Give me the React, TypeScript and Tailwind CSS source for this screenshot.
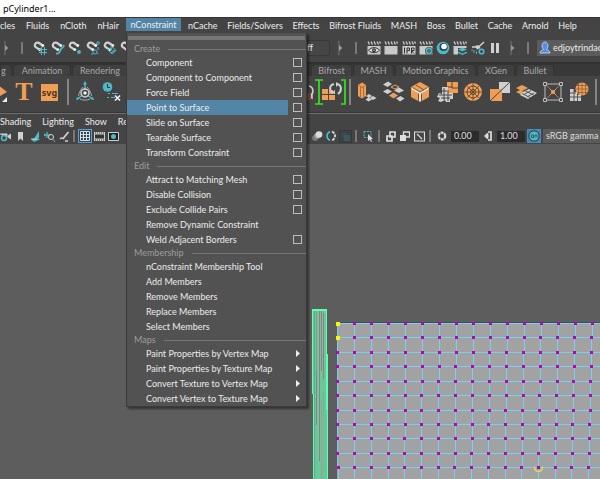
import type { ReactNode } from "react";

const TEAL = "#4db8c6";
const ORANGE = "#ee9f55";
const LIGHT = "#d0d0d0";

type IconProps = { w?: number; h?: number; children: ReactNode };

function Icon({ w = 14, h = 14, children }: IconProps) {
  return (
    <svg width={w} height={h} viewBox={`0 0 ${w} ${h}`} fill="none" className="block shrink-0" aria-hidden="true">
      {children}
    </svg>
  );
}

function Tool({ label, children, className = "" }: { label: string; children: ReactNode; className?: string }) {
  return (
    <button type="button" aria-label={label} className={`flex shrink-0 items-center justify-center ${className}`}>
      {children}
    </button>
  );
}

function Divider({ tall = false }: { tall?: boolean }) {
  return <span className={tall ? "h-[26px] w-[2px] shrink-0 bg-[#858585]" : "h-3 w-[2px] shrink-0 bg-[#787878]"} />;
}

function Collapser() {
  return (
    <Icon w={5} h={14}>
      <path d="M1 0v14" stroke="#777" />
      <path d="M1 4l3.500 3L1 10z" fill="#999" />
    </Icon>
  );
}

/* ---------- status line icons ---------- */

function Magnet({ children }: { children?: ReactNode }) {
  return (
    <Icon>
      <path d="M6.800 8.800 2.800 6.200C.8 4.600 2.200 1.200 5 1.700c1.200.2 1.800.8 5 3" stroke={LIGHT} strokeWidth="2.200" />
      <path d="m6 8 1.800 1.300M9 4l1.800 1.200" stroke="#fff" strokeWidth="2.600" />
      {children}
    </Icon>
  );
}

const magnets: { label: string; art: ReactNode }[] = [
  { label: "Snap to grids", art: <path d="M8.500 6v8M11.500 6v8M6 8.500h8M6 11.500h8" stroke={TEAL} /> },
  { label: "Snap to curves", art: <path d="M5 12.500c5 .5 3.500-3.500 5.500-5s2-1 2.500-3.500" stroke={TEAL} strokeWidth="1.800" /> },
  { label: "Snap to points", art: <circle cx="11" cy="11" r="1.900" fill={TEAL} /> },
  {
    label: "Snap to projected center",
    art: (
      <g stroke={TEAL}>
        <circle cx="9" cy="11" r="2" />
        <circle cx="12" cy="2" r="1.300" />
        <path d="M12 6v3M5 13h2M12 12v1" />
      </g>
    ),
  },
  {
    label: "Snap to view planes",
    art: <path d="m5 9 4-3.500 4 4L9 13zM7 7.500l4 4M9.500 6 7 10.500M12 9l-4 3" stroke={TEAL} />,
  },
];

function Clapper({ children }: { children?: ReactNode }) {
  return (
    <Icon>
      <path d="m1 .5 1.500 3M4 .5l1.500 3M7 .5l1.500 3M10 .5l1.500 3M12.500.5l1 2" stroke={LIGHT} strokeWidth="1.300" />
      <path d="M.5 5h13v8.500H.5z" fill="#c9c9c9" />
      {children}
    </Icon>
  );
}

const renderTools: { label: string; art: ReactNode }[] = [
  {
    label: "Open render view",
    art: (
      <Clapper>
        <path d="M1.500 9.200C4 5.800 10 5.800 12.500 9.200 10 12.500 4 12.500 1.500 9.200z" stroke="#333" fill="#ddd" />
        <circle cx="7" cy="9.200" r="2" fill="#333" />
        <circle cx="7" cy="9.200" r=".7" fill="#ddd" />
      </Clapper>
    ),
  },
  { label: "Render current frame", art: <Clapper /> },
  {
    label: "Render preview",
    art: (
      <Clapper>
        <path d="M2.500 6.500v6M5 12.500V7h2.500v2.500H5M9.500 12.500V7H12v2.500H9.500l2.500 3" stroke="#333" />
      </Clapper>
    ),
  },
  {
    label: "Render settings",
    art: (
      <Clapper>
        <circle cx="10" cy="10" r="4" fill="#444" />
        <circle cx="10" cy="10" r="2.600" stroke={TEAL} strokeWidth="1.600" />
        <circle cx="10" cy="10" r=".8" fill={TEAL} />
      </Clapper>
    ),
  },
  {
    label: "Hypershade",
    art: (
      <Icon>
        <circle cx="7" cy="7" r="6.300" fill={TEAL} />
        <circle cx="7.500" cy="6" r="4" fill="#28434a" />
        <circle cx="8" cy="5.500" r="2.800" fill="#fff" />
      </Icon>
    ),
  },
  {
    label: "Render layers",
    art: (
      <Clapper>
        <path d="M5 7h9v7H5z" fill="#444" />
        <path d="m5 8.500 4.500-2L14 8.500l-4.500 2zM5 10.500l4.500 2 4.500-2v1.500l-4.500 2-4.500-2z" fill={TEAL} />
      </Clapper>
    ),
  },
  {
    label: "Light editor",
    art: (
      <Icon>
        <path d="M13 1 7 6.500M1 6h4" stroke={LIGHT} strokeWidth="1.600" />
        <path d="m4 5 3-1 2.500 3L6 8.500z" fill={LIGHT} />
        <circle cx="10.500" cy="10.500" r="2.300" stroke={TEAL} strokeWidth="1.600" />
        <path d="M3 9v3M5.500 10.500v2.500M1 8.500v1.500" stroke={TEAL} />
      </Icon>
    ),
  },
  {
    label: "Pause viewport",
    art: (
      <Icon>
        <path d="M3 2h3v10H3zM8 2h3v10H8z" fill={LIGHT} />
      </Icon>
    ),
  },
];

/* ---------- shelf icons ---------- */

const shelfTools: { label: string; art: ReactNode }[] = [
  {
    label: "Emit from object",
    art: (
      <>
        <path d="M2 4 6 1.500 10 4v11l-4 2.500L2 15z" fill={ORANGE} />
        <path d="M2.500 4 6 6.500 9.500 4M4.500 6v10M7.500 6v10" stroke="#9a6433" strokeWidth=".8" />
        <path d="m10 15 3-2 3 2-3 2zM14 17l3-2 3.500 2-3.500 2zM9.500 18.500l3-2 3.500 2-3.500 2z" fill={LIGHT} />
      </>
    ),
  },
  {
    label: "Scatter",
    art: (
      <>
        <path d="m0 3.500 5-3 4 2.500-4.500 3zM0 10.500 4.500 8 9 10.500 4.500 13zM11 9.500l5-3 5 3-5 2.500zM13 17.500l4.500-2.500 4 2.500-4.500 3z" fill={LIGHT} />
        <path d="m6 14.500 4.500-3 4.500 3-4.500 3z" fill={ORANGE} />
        <path d="m8 6 4-2 4 2-4 2z" stroke={ORANGE} />
      </>
    ),
  },
  {
    label: "Voronoi",
    art: (
      <>
        <path d="m2 6 9-5 9 5v10l-9 5-9-5z" fill={ORANGE} />
        <path d="M3 7.500 11 12l8-4.500M11 12v8" stroke="#e4e4e4" strokeWidth="2" />
        <path d="m7 4 8 5M3.500 6.500 11 11l7.500-4.500M9.500 12.500V20M12.500 12.500V20" stroke="#5b4330" strokeWidth=".8" />
      </>
    ),
  },
  {
    label: "Fracture",
    art: (
      <>
        <path d="M11 1h11v11H11z" fill={ORANGE} />
        <path d="M16 1v6h6M11 6h5" stroke="#5b4330" />
        <path d="M6 6h6v6h5v6h-3v3h-4l-1-2-4 2-3-1 2-3-3-1 2-4 3 1z" fill={LIGHT} />
        <path d="M6 10h7M8 7v12M12 11v9M3 14h13M5 17h9" stroke="#444" />
      </>
    ),
  },
  {
    label: "Radial",
    art: (
      <>
        <circle cx="11" cy="11" r="9" fill={ORANGE} />
        <circle cx="11" cy="11" r="6" stroke="#5b4330" />
        <circle cx="11" cy="11" r="2.500" stroke="#5b4330" />
        <path d="M11 2v18M2 11h18M4.500 4.500l13 13M17.500 4.500l-13 13" stroke="#5b4330" strokeWidth=".8" />
      </>
    ),
  },
  {
    label: "Transfer",
    art: (
      <>
        <path d="M10 1h11v11H10z" fill={LIGHT} />
        <path d="M1 8h12v12H1z" fill={ORANGE} />
        <path d="M1 20 21 1M13 12.500h8M9.500 1v7" stroke="#444" />
      </>
    ),
  },
  {
    label: "Tiles",
    art: (
      <>
        <path d="m1 7 6-3 6 3-6 3zM1 11l4-2 6 3-4 2z" fill={ORANGE} />
        <path d="m8 11 6-3 8 4-9 6-8-4z" fill={LIGHT} />
        <path d="m9 13.500 7-4M10.500 10l8 4M7 12.500l8 4M12 16l7-4" stroke="#555" />
      </>
    ),
  },
  {
    label: "Lattice",
    art: (
      <>
        <path d="M3 3h16v16H3z" stroke="#bdbdbd" />
        <path d="m3 3 16 16M19 3 3 19" stroke="#b98a5f" strokeWidth=".8" />
        <path d="m8 8 6 6M14 8l-6 6" stroke={ORANGE} />
        <circle cx="11" cy="11" r="2" fill={ORANGE} />
        <path d="M1.500 1.500h3v3h-3zM17.500 1.500h3v3h-3zM1.500 17.500h3v3h-3zM17.500 17.500h3v3h-3z" stroke="#bdbdbd" fill="#444" />
      </>
    ),
  },
  {
    label: "Curve grid",
    art: (
      <>
        <circle cx="14" cy="8" r="6.500" fill={ORANGE} />
        <path d="M8 8h12M14 1.500v13M9 4.500h10M9 11.500h10M10.500 3v10M17.500 3v10" stroke="#8a5f38" strokeWidth=".8" />
        <path d="M2 8h4v3h3v3h4v6H2z" fill={LIGHT} />
        <path d="M2 12h6M2 16h11M6 8v12M9.500 13v7" stroke="#555" />
      </>
    ),
  },
];

/* ---------- top bars ---------- */

type MenuEntry = { label: string; option?: boolean; submenu?: boolean; active?: boolean };

const constraintMenu: { title: string; entries: MenuEntry[] }[] = [
  {
    title: "Create",
    entries: [
      { label: "Component", option: true },
      { label: "Component to Component", option: true },
      { label: "Force Field", option: true },
      { label: "Point to Surface", option: true, active: true },
      { label: "Slide on Surface", option: true },
      { label: "Tearable Surface", option: true },
      { label: "Transform Constraint", option: true },
    ],
  },
  {
    title: "Edit",
    entries: [
      { label: "Attract to Matching Mesh", option: true },
      { label: "Disable Collision", option: true },
      { label: "Exclude Collide Pairs", option: true },
      { label: "Remove Dynamic Constraint" },
      { label: "Weld Adjacent Borders", option: true },
    ],
  },
  {
    title: "Membership",
    entries: [
      { label: "nConstraint Membership Tool" },
      { label: "Add Members" },
      { label: "Remove Members" },
      { label: "Replace Members" },
      { label: "Select Members" },
    ],
  },
  {
    title: "Maps",
    entries: [
      { label: "Paint Properties by Vertex Map", submenu: true },
      { label: "Paint Properties by Texture Map", submenu: true },
      { label: "Convert Texture to Vertex Map", submenu: true },
      { label: "Convert Vertex to Texture Map", submenu: true },
    ],
  },
];

function ConstraintMenu() {
  return (
    <div className="absolute top-full left-0 z-10 w-[181px] border border-t-0 border-[#3a3a3a] bg-[#525252] shadow-[2px_2px_2px_rgba(0,0,0,0.45)]">
      <div className="flex h-[10px] items-center px-px">
        <div className="h-1 w-full bg-[radial-gradient(circle,#8f8f8f_0.5px,transparent_1px)] bg-[size:2px_2px]" />
      </div>
      {constraintMenu.map((section) => (
        <section key={section.title}>
          <h2 className="flex h-3 items-center gap-2 pl-[7px] text-[#9d9d9d]">
            {section.title}
            <span className="h-px flex-1 bg-[#757575]" />
          </h2>
          {section.entries.map((entry) => (
            <div key={entry.label} className="flex h-[15px] items-center">
              <button
                type="button"
                className={`flex h-full w-[161px] items-center pl-[19px] text-left whitespace-nowrap ${entry.active ? "bg-[#5285a6]" : ""}`}
              >
                {entry.label}
              </button>
              {entry.option && (
                <button
                  type="button"
                  aria-label={`${entry.label} options`}
                  className="ml-[5px] size-[9px] border border-[#bdbdbd]"
                />
              )}
              {entry.submenu && (
                <span className="ml-2">
                  <Icon w={4} h={7}>
                    <path d="M0 0v7l4-3.500z" fill="#eee" />
                  </Icon>
                </span>
              )}
            </div>
          ))}
        </section>
      ))}
    </div>
  );
}

const leftMenus = ["cles", "Fluids", "nCloth", "nHair"];
const rightMenus = ["nCache", "Fields/Solvers", "Effects", "Bifrost Fluids", "MASH", "Boss", "Bullet", "Cache", "Arnold", "Help"];

function MenuBar() {
  return (
    <nav className="relative flex h-[15px] items-stretch">
      <div className="flex w-[126px] shrink-0 items-center justify-between pr-[7px]">
        {leftMenus.map((name) => (
          <button key={name} type="button">
            {name}
          </button>
        ))}
      </div>
      <div className="relative shrink-0">
        <button type="button" className="h-[13px] w-[55px] bg-[#5285a6] leading-[13px]">
          nConstraint
        </button>
        <ConstraintMenu />
      </div>
      <div className="flex w-[396px] items-center justify-between pl-[7px]">
        {rightMenus.map((name) => (
          <button key={name} type="button" className="whitespace-nowrap">
            {name}
          </button>
        ))}
      </div>
    </nav>
  );
}

function StatusLine() {
  return (
    <div className="flex h-[29px] items-center overflow-hidden">
      <div className="flex w-[307px] shrink-0 items-center pl-1">
        <Collapser />
        <span className="w-3" />
        <Divider />
        <div className="ml-[10px] flex w-[84px] justify-between">
          {magnets.map((m) => (
            <Tool key={m.label} label={m.label}>
              <Magnet>{m.art}</Magnet>
            </Tool>
          ))}
        </div>
        <div className="ml-[3px]">
          <Magnet />
        </div>
      </div>
      <input
        aria-label="Symmetry"
        defaultValue="ff"
        className="h-4 w-[23px] rounded-r-sm border border-l-0 border-[#383838] bg-[#464646] outline-none"
      />
      <div className="flex shrink-0 items-center pl-2">
        <Collapser />
        <span className="w-3" />
        <Divider />
        <div className="ml-[10px] flex w-[135px] justify-between">
          {renderTools.map((t) => (
            <Tool key={t.label} label={t.label}>
              {t.art}
            </Tool>
          ))}
        </div>
        <span className="w-2" />
        <Collapser />
        <span className="w-3" />
        <Divider />
      </div>
      <button
        type="button"
        className="ml-2 flex h-4 min-w-0 flex-1 items-center gap-[2px] overflow-hidden bg-[#5b5b5b] pl-[2px] whitespace-nowrap"
      >
        <Icon w={12} h={14}>
          <path d="M1 12c0-2 2-3 3.500-3.500C1.500 5 3.500 1 6 1s4.500 4 1.500 7.500C9 9 11 10 11 12z" fill="#5b8be6" stroke="#b5cdf8" />
        </Icon>
        <span>edjoytrindac</span>
      </button>
    </div>
  );
}

function ShelfTab({ name, className }: { name: string; className: string }) {
  return (
    <button
      type="button"
      role="tab"
      className={`flex h-full shrink-0 items-center justify-center overflow-hidden rounded-t-sm border border-b-0 border-[#333] bg-[#404040] whitespace-nowrap text-[#a8a8a8] ${className}`}
    >
      {name}
    </button>
  );
}

function Shelf() {
  return (
    <>
      <div role="tablist" className="flex h-[14px] items-end overflow-hidden border-t-2 border-[#303030] bg-[#383838]">
        <div className="flex h-full w-[311px] shrink-0 gap-px">
          <ShelfTab name="g" className="w-3 justify-start" />
          <ShelfTab name="Animation" className="w-[58px]" />
          <ShelfTab name="Rendering" className="w-[56px]" />
        </div>
        <div className="flex h-full gap-px">
          <ShelfTab name="Bifrost" className="w-[41px]" />
          <ShelfTab name="MASH" className="w-[41px]" />
          <ShelfTab name="Motion Graphics" className="w-[81px]" />
          <ShelfTab name="XGen" className="w-[38px]" />
          <ShelfTab name="Bullet" className="w-[38px]" />
        </div>
      </div>
      <div className="flex h-[37px] items-center overflow-hidden border-b border-[#383838] pb-1">
        <div className="flex w-[307px] shrink-0 items-center">
          <Tool label="Motion trail">
            <Icon w={8} h={22}>
              <path d="M0 5.500 7 11l-7 4z" fill={ORANGE} />
              <path d="M7 16v5H2z" fill="#eee" />
            </Icon>
          </Tool>
          <Tool label="Type" className="ml-2 h-[22px] w-4">
            <span className="font-['Liberation_Serif',serif] text-[26px] leading-[22px] font-bold text-[#ee9f55]">T</span>
          </Tool>
          <Tool label="Vector" className="ml-[9px] h-[17px] w-[17px] bg-[#ee9f55]">
            <span className="font-['Noto_Sans',sans-serif] text-[9px] leading-none font-bold text-[#4a3320]">svg</span>
          </Tool>
          <span className="w-[9px]" />
          <Divider tall />
          <Tool label="Joint" className="ml-[6px]">
            <Icon w={20} h={22}>
              <path d="M10 1v8M2 18l6-4M18 18l-6-4" stroke={TEAL} strokeWidth="1.500" />
              <path d="m10 0-2 3.500h4zM1 19l1-3 3 2zM19 19l-1-3-3 2z" fill={TEAL} />
              <path d="M8 6c-3 3-4 6-4.500 9M12 6c3 3 4 6 4.500 9M5 18c3 1.500 7 1.500 10 0" stroke="#aaa" />
              <circle cx="10" cy="12" r="4" stroke={LIGHT} strokeWidth="1.500" />
              <circle cx="10" cy="12" r="1.800" fill="#eee" />
            </Icon>
          </Tool>
          <Tool label="Delete history" className="ml-[7px]">
            <Icon w={20} h={22}>
              <circle cx="5.500" cy="6" r="4.800" fill={TEAL} />
              <path d="M5.500 3v3.500H8" stroke="#333" />
              <path d="M6 12.500h2M10 12.500h6M5 16.500h2M9 16.500h4" stroke={TEAL} />
              <path d="m13 14.500 5 5M18 14.500l-5 5" stroke="#eee" strokeWidth="1.700" />
            </Icon>
          </Tool>
        </div>
        <Tool label="Constraint group">
          <Icon w={40} h={28}>
            <path d="M2 8c5 1 5 8 1 10M1 18l4-2v4z" stroke={LIGHT} strokeWidth="1.500" />
            <path d="M0 15h4v7H0z" fill="#76502d" />
            <path d="M8 2h8M12 2v24M8 26h8M34 2h4v24h-4" stroke="#36e322" strokeWidth="1.700" />
            <path d="M15 11h6v5h-6zM15 17h6v5h-6zM22 17h6v5h-6zM22 12h4v4h-4z" fill={ORANGE} />
            <path d="M27 6c-5 1-5 7-1 9M30 6c5 1 5 7 1 10" stroke={LIGHT} strokeWidth="2" />
            <path d="m24 15 4 1V12zM29 4v5l3-3z" fill={LIGHT} />
          </Icon>
        </Tool>
        <span className="w-[2px]" />
        <Divider tall />
        <div className="ml-[5px] flex w-[234px] shrink-0 justify-between">
          {shelfTools.map((t) => (
            <Tool key={t.label} label={t.label}>
              <Icon w={22} h={22}>
                {t.art}
              </Icon>
            </Tool>
          ))}
        </div>
        <span className="w-[5px] shrink-0" />
        <Divider tall />
      </div>
    </>
  );
}

/* ---------- viewport panel ---------- */

const panelLeft: { label: string; art: ReactNode }[] = [
  {
    label: "Select camera",
    art: (
      <>
        <path d="M0 3h7v3M8 5l3-2v5L8 6z" stroke={LIGHT} fill={LIGHT} />
        <circle cx="4" cy="7" r="2.500" stroke={TEAL} fill="#444" strokeWidth="1.500" />
      </>
    ),
  },
  { label: "Bookmarks", art: <path d="M3 1h5v9L5.500 7.500 3 10z" fill={LIGHT} /> },
  {
    label: "Image plane",
    art: (
      <>
        <path d="m1 8.500 6-2 3 2-6 2.500z" fill={TEAL} />
        <path d="M4 7.500 9 0v7z" fill={TEAL} />
        <path d="M1 8h6" stroke={LIGHT} />
      </>
    ),
  },
  {
    label: "2D pan and zoom",
    art: (
      <>
        <path d="M0 4h6M3 1v6M1 3 0 4l1 1" stroke={TEAL} strokeWidth="1.300" />
        <circle cx="7" cy="6" r="2.500" stroke={LIGHT} />
        <path d="m9 8 2 3" stroke={TEAL} />
      </>
    ),
  },
  {
    label: "Grease pencil",
    art: (
      <>
        <path d="m9.500 1-5 6" stroke={LIGHT} strokeWidth="1.800" />
        <path d="M1 8c2-2 3-1 4 0M6 10h3" stroke={LIGHT} strokeWidth="1.500" />
      </>
    ),
  },
];

function NumberField({ label, value }: { label: string; value: string }) {
  return (
    <input
      aria-label={label}
      defaultValue={value}
      className="h-[11px] w-7 shrink-0 bg-[#2b2b2b] pl-[3px] text-[#ddd] outline-none"
    />
  );
}

function PanelBars() {
  return (
    <div className="border-t border-[#6c6c6c]">
      <nav className="flex h-[15px] items-center gap-[11px] overflow-hidden">
        {["Shading", "Lighting", "Show", "Re"].map((name) => (
          <button key={name} type="button">
            {name}
          </button>
        ))}
      </nav>
      <div className="flex h-[15px] items-center overflow-hidden pb-px">
        <div className="flex w-[311px] shrink-0 items-center">
          <div className="flex w-[70px] justify-between">
            {panelLeft.map((t) => (
              <Tool key={t.label} label={t.label}>
                <Icon w={11} h={11}>
                  {t.art}
                </Icon>
              </Tool>
            ))}
          </div>
          <span className="w-[3px]" />
          <Divider />
          <Tool label="Grid" className="ml-[3px] size-[14px] border border-[#5aa3d8] bg-[#2f4558]">
            <Icon w={10} h={10}>
              <path d="M.5.500h9v9h-9zM.5 3.500h9M.5 6.500h9M3.500.500v9M6.500.500v9" stroke="#ddd" />
            </Icon>
          </Tool>
          <Tool label="Film gate" className="ml-[2px]">
            <Icon w={11} h={11}>
              <path d="M0 1h11v9H0z" fill="#ccc" />
              <path d="M1 3.500h9v4H1z" fill="#333" />
              <path d="M1 2h9M1 9h9" stroke="#333" strokeDasharray="1 1" />
            </Icon>
          </Tool>
          <Tool label="Resolution gate" className="ml-[3px]">
            <Icon w={11} h={11}>
              <path d="M.5 1.500h10v8H.5z" fill="#222" stroke="#ccc" />
              <circle cx="5.500" cy="5.500" r="2.500" fill={TEAL} />
            </Icon>
          </Tool>
        </div>
        <Icon w={12} h={12}>
          <circle cx="4" cy="8" r="3" fill="#777" />
          <circle cx="6" cy="6" r="3" fill="#999" />
          <circle cx="8" cy="4.500" r="3.300" fill="#ddd" />
        </Icon>
        <span className="w-[2px]" />
        <Tool label="Isolate select">
          <Icon w={12} h={12}>
            <path d="M5 1.500C1 3.500 1 8.500 5 10.500" stroke={TEAL} strokeWidth="1.600" />
            <path d="M7 1.500c4 2 4 7 0 9" stroke="#ddd" strokeWidth="1.800" strokeDasharray="3 1" />
          </Icon>
        </Tool>
        <Tool label="X-ray" className="ml-[2px] size-[13px] border border-[#383838] bg-[#3d4142]">
          <Icon w={9} h={9}>
            <path d="M0 1h6v5H0z" fill="#344c50" />
            <path d="M3 3h6v6H3z" fill="#39595e" />
          </Icon>
        </Tool>
        <span className="w-[3px]" />
        <Divider />
        <Tool label="Selection highlighting" className="ml-[6px]">
          <Icon w={11} h={12}>
            <path d="M1 1.500h7v6H1z" stroke={TEAL} strokeDasharray="2 1" />
            <path d="m5 4 5 5H8l1 2.500-1 .5-1-2.500L5 11z" fill="#ddd" />
          </Icon>
        </Tool>
        <span className="w-1" />
        <Divider />
        <div className="ml-[6px] flex w-[39px] shrink-0 justify-between">
          <Icon w={10} h={11}>
            <path d="M4 1h5v5H4zM1 5h5v5H1z" stroke="#ddd" strokeWidth="1.700" />
          </Icon>
          <Icon w={10} h={11}>
            <path d="M3.500 1h6v5h-6z" stroke="#ddd" strokeWidth="1.300" />
            <path d="M0 4h6v6H0z" fill="#ddd" />
          </Icon>
          <Icon w={11} h={11}>
            <path d="M.5 1h10v9H.5zM3 3l5 5" stroke="#ddd" strokeWidth="1.200" />
          </Icon>
        </div>
        <span className="w-[4px]" />
        <Divider />
        <span className="w-[6px]" />
        <Tool label="Exposure" className="mr-1">
          <Icon w={10} h={10}>
            <circle cx="5" cy="5" r="3.300" stroke="#ddd" strokeWidth="2.200" strokeDasharray="2.800 .65" />
          </Icon>
        </Tool>
        <NumberField label="Exposure value" value="0.00" />
        <Tool label="Gamma" className="mx-1">
          <Icon w={10} h={10}>
            <path d="M5 1h3v8H5" stroke="#ddd" strokeWidth="1.700" />
            <path d="M5 2.500a2.500 2.500 0 0 0 0 5zM1 5h1" fill="#ddd" stroke="#ddd" />
          </Icon>
        </Tool>
        <NumberField label="Gamma value" value="1.00" />
        <Tool label="Color management" className="ml-[2px] size-[14px] border border-[#4d8cb5] bg-[#4a82a5]">
          <Icon w={12} h={12}>
            <circle cx="6" cy="6" r="5.200" fill={TEAL} stroke="#263c45" />
            <path d="M3.500 5h2v2.500h-2zM7 7.500V5h2v2.500" stroke="#2f5f6b" />
          </Icon>
        </Tool>
        <select
          aria-label="View transform"
          className="ml-[2px] h-[14px] min-w-0 flex-1 appearance-none bg-[#5b5b5b] pl-[3px] text-[#ddd] outline-none"
        >
          <option>sRGB gamma</option>
        </select>
      </div>
    </div>
  );
}

const cols = Array.from({ length: 16 }, (_, i) => i);
const rows = Array.from({ length: 11 }, (_, j) => j);

/** Screen position of a cloth vertex; columns converge slightly towards the bottom. */
function vertex(i: number, j: number) {
  const x = 337 + 0.05 * j + i * (16.98 - 0.027 * j);
  const y = 179 + j * 14.43;
  return { x: Math.round(x), y: Math.round(y) };
}

const stripes = [
  { x: 314, y: 0, h: 170, c: "#55b183" },
  { x: 316, y: 0, h: 112, c: "#98938f" },
  { x: 318, y: 2, h: 168, c: "#54dca0" },
  { x: 319, y: 0, h: 150, c: "#977b85" },
  { x: 321, y: 0, h: 60, c: "#a07786" },
  { x: 323, y: 2, h: 66, c: "#a07786" },
  { x: 316, y: 60, h: 54, c: "#a07786" },
  { x: 321, y: 90, h: 80, c: "#9f9a97" },
  { x: 325, y: 76, h: 94, c: "#58ce96" },
  { x: 323, y: 80, h: 80, c: "#8aa998" },
];

function Viewport() {
  return (
    <svg viewBox="0 0 600 335" className="block w-full bg-[#5d5d5d]" role="img" aria-label="Perspective viewport">
      <g shapeRendering="crispEdges">
        <path d="M312 165h15v100l1 25v45h-15v-80l-1-40z" fill="#6fc59b" />
        {stripes.map((s, k) => (
          <rect key={k} x={s.x} y={s.y + 167} width="1" height={s.h} fill={s.c} />
        ))}
        <path d="M312 165h15v2h-15zM312 165h1v85h-1zM313 250h1v85h-1zM326 166h1v100h-1zM327 210h1v125h-1z" fill="#5dffae" />
        <path d="M337 178h263v157H337z" fill="#a2a2a2" />
        <rect x="337" y="178" width="263" height="1" fill="#4b4b4b" />
        {rows.map((j) => (
          <rect key={j} x="337" y={vertex(0, j).y} width="263" height="1" fill="#72d3f0" />
        ))}
        {cols.map((i) => (
          <g key={i} fill="#72d3f0">
            {rows.map((j) => {
              const a = vertex(i, j);
              return <rect key={j} x={a.x} y={a.y} width="1" height="15" />;
            })}
          </g>
        ))}
        {cols.map((i) =>
          rows.map((j) => {
            const p = vertex(i, j);
            const picked = i === 0 && j < 2;
            return (
              <rect
                key={`${i}-${j}`}
                x={p.x - 1}
                y={p.y - 1}
                width={picked ? 4 : 3}
                height={picked ? 4 : 3}
                fill={picked ? "#fff500" : "#b205b8"}
              />
            );
          }),
        )}
      </g>
      <path d="M534.500 322.500c0 6.500 8 6.500 8 0" fill="none" stroke="#f0dc4a" strokeWidth="1.300" />
    </svg>
  );
}

export default function App() {
  return (
    <div className="min-h-screen overflow-hidden bg-[#5d5d5d] font-['Lato','Noto_Sans',sans-serif] text-[9px] leading-3 text-[#ececec]">
      <header className="flex h-[17px] items-center bg-white pl-[3px] font-['Noto_Sans',sans-serif] text-black">
        pCylinder1...
      </header>
      <div className="border-t border-[#363636] bg-[#444]">
        <MenuBar />
        <StatusLine />
        <Shelf />
        <PanelBars />
      </div>
      <Viewport />
    </div>
  );
}
